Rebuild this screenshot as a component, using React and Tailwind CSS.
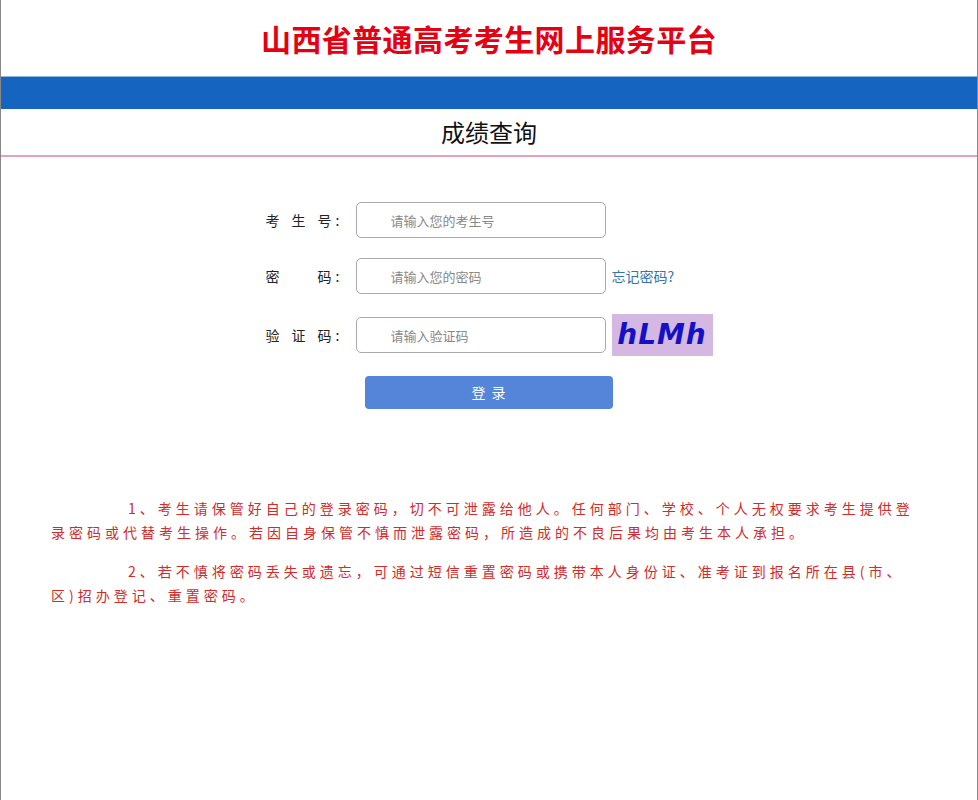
import React from 'react';

const cjk = { fontFamily: '"Noto Sans CJK SC", "Noto Sans", sans-serif' };

const Label = ({ chars }) => (
    <div className="w-[90px] flex items-center text-[14px] text-[#222]">
        <span className="w-[66px] flex justify-between">
            {chars.map((c, i) => <span key={i}>{c}</span>)}
        </span>
        <span className="ml-[4px]">:</span>
    </div>
);

const Field = ({ placeholder }) => (
    <input
        type="text"
        placeholder={placeholder}
        className="w-[250px] h-[36px] border border-[#aaa] rounded-[5px] pl-[34px] pr-2 text-[13px] text-[#333] placeholder:text-[#888] outline-none bg-white"
    />
);

export default function App() {
    return (
        <div className="min-h-[800px] bg-white border-x border-[#888] flex flex-col" style={cjk}>
            <header className="h-[76px] flex items-center justify-center pb-[1px]">
                <h1 className="text-[30px] font-bold text-[#e50012] tracking-[0.4px] leading-none">山西省普通高考考生网上服务平台</h1>
            </header>
            <div className="h-[33px] bg-[#1565c0] border-t border-[#8fb8e8]" />
            <div className="h-[48px] flex items-center justify-center border-b-2 border-[#eaa0b4]">
                <h2 className="text-[24px] text-[#111] leading-none">成绩查询</h2>
            </div>

            <div className="mt-[45px] mx-auto w-[447px] flex flex-col gap-[20px]">
                <div className="flex items-center">
                    <Label chars={['考', '生', '号']} />
                    <Field placeholder="请输入您的考生号" />
                </div>
                <div className="flex items-center">
                    <Label chars={['密', '码']} />
                    <Field placeholder="请输入您的密码" />
                    <a href="#" className="ml-[6px] text-[14px] text-[#3574b0]">忘记密码?</a>
                </div>
                <div className="flex items-center">
                    <Label chars={['验', '证', '码']} />
                    <Field placeholder="请输入验证码" />
                    <div className="ml-[6px] w-[101px] h-[42px] bg-[#d5b8e1] flex items-center justify-center">
                        <span
                            className="text-[28px] font-bold italic text-[#1410c8] tracking-[1px] leading-none"
                            style={{ fontFamily: '"DejaVu Sans", sans-serif' }}
                        >
                            hLMh
                        </span>
                    </div>
                </div>
                <button className="ml-[99px] w-[248px] h-[33px] rounded-[4px] bg-[#5585d9] text-white text-[14px] tracking-[6px] pl-[6px]">
                    登录
                </button>
            </div>

            <div className="mt-[87px] pl-[50px] pr-[48px] text-[14px] text-[#d42a2a] tracking-[4px] leading-[24px] flex flex-col gap-[15px]">
                <p className="indent-[77px]">1、考生请保管好自己的登录密码，切不可泄露给他人。任何部门、学校、个人无权要求考生提供登录密码或代替考生操作。若因自身保管不慎而泄露密码，所造成的不良后果均由考生本人承担。</p>
                <p className="indent-[77px]">2、若不慎将密码丢失或遗忘，可通过短信重置密码或携带本人身份证、准考证到报名所在县(市、区)招办登记、重置密码。</p>
            </div>
        </div>
    );
}
